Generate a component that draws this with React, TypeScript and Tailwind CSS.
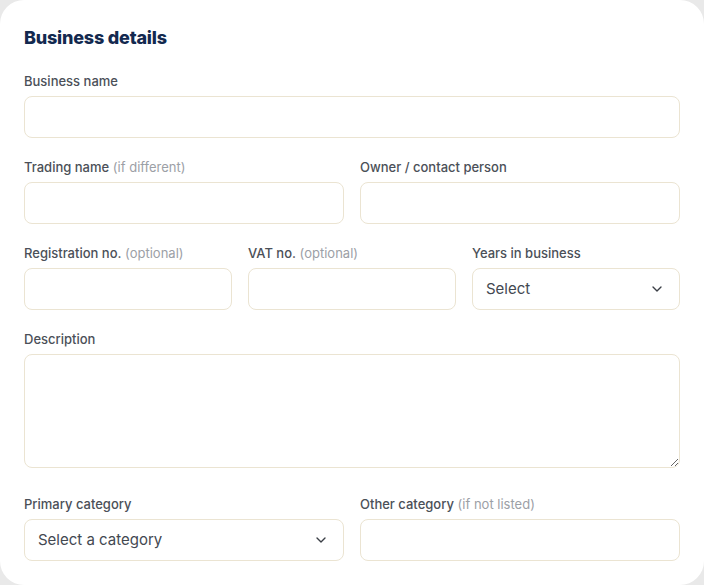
import { ChevronDown } from "lucide-react";

const fieldBox =
  "block w-full h-[42px] rounded-lg border border-[#ebe4d2] bg-white px-[13px] text-[15px] font-normal text-[#434851] outline-none";

function Label({ text, hint }: { text: string; hint?: string }) {
  return (
    <label className="mb-1.5 block text-[13px] leading-[18px] font-medium text-[#4b5058]">
      {text}
      {hint && <span className="font-normal text-[#9ca0a6]"> {hint}</span>}
    </label>
  );
}

function Field({ label, hint }: { label: string; hint?: string }) {
  return (
    <div>
      <Label text={label} hint={hint} />
      <input type="text" className={fieldBox} />
    </div>
  );
}

function SelectField({ label, placeholder }: { label: string; placeholder: string }) {
  return (
    <div>
      <Label text={label} />
      <button type="button" className={`${fieldBox} flex items-center justify-between pr-[14px] text-left`}>
        <span>{placeholder}</span>
        <ChevronDown size={16} strokeWidth={2} className="text-[#3b3f46]" />
      </button>
    </div>
  );
}

export default function App() {
  return (
    <main
      className="min-h-screen bg-[#e9e9e9]"
      style={{ fontFamily: "Inter, 'Noto Sans', sans-serif" }}
    >
      <div className="h-[585px] w-[704px] rounded-[24px] bg-white px-6 pt-6">
        <h2 className="mb-5 text-[18px] leading-7 font-extrabold tracking-[-0.2px] text-[#13294f]">
          Business details
        </h2>

        <div className="flex flex-col gap-5">
          <Field label="Business name" />

          <div className="grid grid-cols-2 gap-4">
            <Field label="Trading name" hint="(if different)" />
            <Field label="Owner / contact person" />
          </div>

          <div className="grid grid-cols-3 gap-4">
            <Field label="Registration no." hint="(optional)" />
            <Field label="VAT no." hint="(optional)" />
            <SelectField label="Years in business" placeholder="Select" />
          </div>

          <div className="mb-[7px]">
            <Label text="Description" />
            <textarea className="block h-[114px] w-full rounded-lg border border-[#ebe4d2] bg-white px-[13px] py-2 text-[15px] text-[#434851] outline-none" />
          </div>

          <div className="grid grid-cols-2 gap-4">
            <SelectField label="Primary category" placeholder="Select a category" />
            <Field label="Other category" hint="(if not listed)" />
          </div>
        </div>
      </div>
    </main>
  );
}
